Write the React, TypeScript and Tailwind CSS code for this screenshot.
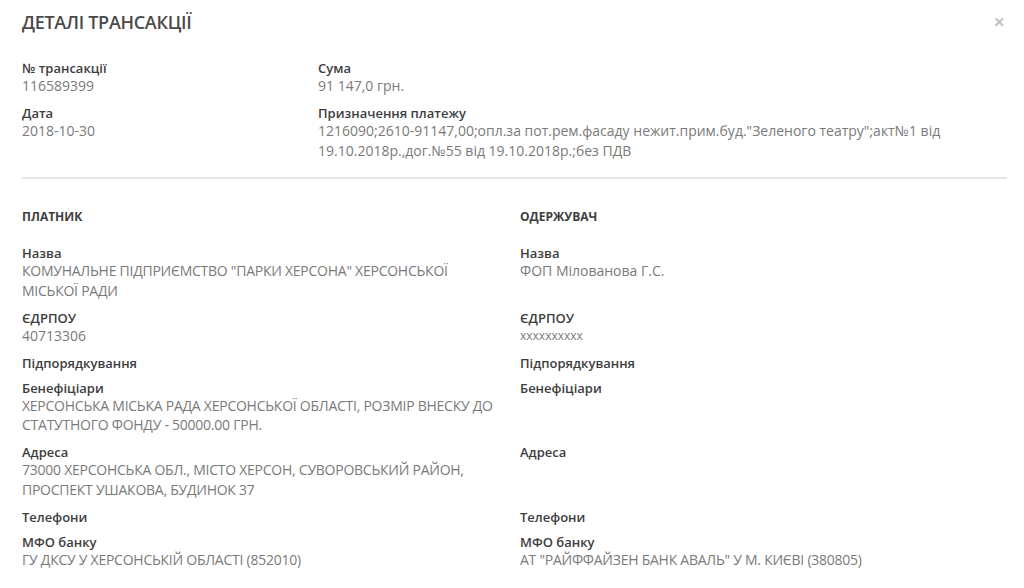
import React from "react";

const font = { fontFamily: '"Open Sans", "Noto Sans", sans-serif' };

function Field({ label, value }: { label: string; value?: React.ReactNode }) {
  return (
    <div className="mb-[9px]">
      <div className="text-[13px] leading-[16px] font-semibold text-[#3d3d3d]">{label}</div>
      {value ? <div className="text-[14px] leading-[19.75px] text-[#7a7a7a] whitespace-nowrap">{value}</div> : null}
    </div>
  );
}

function Up({ children }: { children: React.ReactNode }) {
  return <span className="tracking-[-0.25px]">{children}</span>;
}

function Row({ left, right }: { left: [string, React.ReactNode?]; right: [string, React.ReactNode?] }) {
  return (
    <div className="grid grid-cols-2 gap-x-4">
      <Field label={left[0]} value={left[1]} />
      <Field label={right[0]} value={right[1]} />
    </div>
  );
}

export default function App() {
  return (
    <div className="w-[1024px] h-[588px] bg-white overflow-hidden relative" style={font}>
      <div className="px-[22px] pt-[10px]">
        <div className="flex items-center justify-between">
          <h1 className="text-[18px] leading-[24px] font-semibold text-[#4a4a4a] tracking-[-0.3px]">ДЕТАЛІ ТРАНСАКЦІЇ</h1>
          <span className="text-[#c4c4c4] text-[20px] leading-[20px] font-bold mr-[-3px]">×</span>
        </div>
        <div className="mt-[26px] grid grid-cols-[296px_1fr]">
          <div>
            <Field label="№ трансакції" value="116589399" />
            <Field label="Дата" value="2018-10-30" />
          </div>
          <div>
            <Field label="Сума" value="91 147,0 грн." />
            <Field
              label="Призначення платежу"
              value={
                <>
                  1216090;2610-91147,00;опл.за пот.рем.фасаду нежит.прим.буд."Зеленого театру";акт№1 від
                  <br />
                  19.10.2018р.,дог.№55 від 19.10.2018р.;без ПДВ
                </>
              }
            />
          </div>
        </div>
        <div className="mt-[8px] h-[2px] bg-[#e4e4e4] mr-[-5px]"></div>
        <div className="mt-[30px] grid grid-cols-2 gap-x-4 mb-[20px]">
          <div className="text-[12px] leading-[16px] font-bold text-[#3d3d3d]">ПЛАТНИК</div>
          <div className="text-[12px] leading-[16px] font-bold text-[#3d3d3d]">ОДЕРЖУВАЧ</div>
        </div>
        <Row
          left={["Назва", <Up>КОМУНАЛЬНЕ ПІДПРИЄМСТВО "ПАРКИ ХЕРСОНА" ХЕРСОНСЬКОЇ<br />МІСЬКОЇ РАДИ</Up>]}
          right={["Назва", "ФОП Мілованова Г.С."]}
        />
        <Row
          left={["ЄДРПОУ", "40713306"]}
          right={["ЄДРПОУ", <span className="block text-[12px] leading-[19.75px]">xxxxxxxxxx</span>]}
        />
        <Row left={["Підпорядкування"]} right={["Підпорядкування"]} />
        <Row
          left={["Бенефіціари", <Up>ХЕРСОНСЬКА МІСЬКА РАДА ХЕРСОНСЬКОЇ ОБЛАСТІ, РОЗМІР ВНЕСКУ ДО<br />СТАТУТНОГО ФОНДУ - 50000.00 ГРН.</Up>]}
          right={["Бенефіціари"]}
        />
        <Row
          left={["Адреса", <Up>73000 ХЕРСОНСЬКА ОБЛ., МІСТО ХЕРСОН, СУВОРОВСЬКИЙ РАЙОН,<br />ПРОСПЕКТ УШАКОВА, БУДИНОК 37</Up>]}
          right={["Адреса"]}
        />
        <Row left={["Телефони"]} right={["Телефони"]} />
        <Row
          left={["МФО банку", <Up>ГУ ДКСУ У ХЕРСОНСЬКІЙ ОБЛАСТІ (852010)</Up>]}
          right={["МФО банку", <Up>АТ "РАЙФФАЙЗЕН БАНК АВАЛЬ" У М. КИЄВІ (380805)</Up>]}
        />
      </div>
    </div>
  );
}
